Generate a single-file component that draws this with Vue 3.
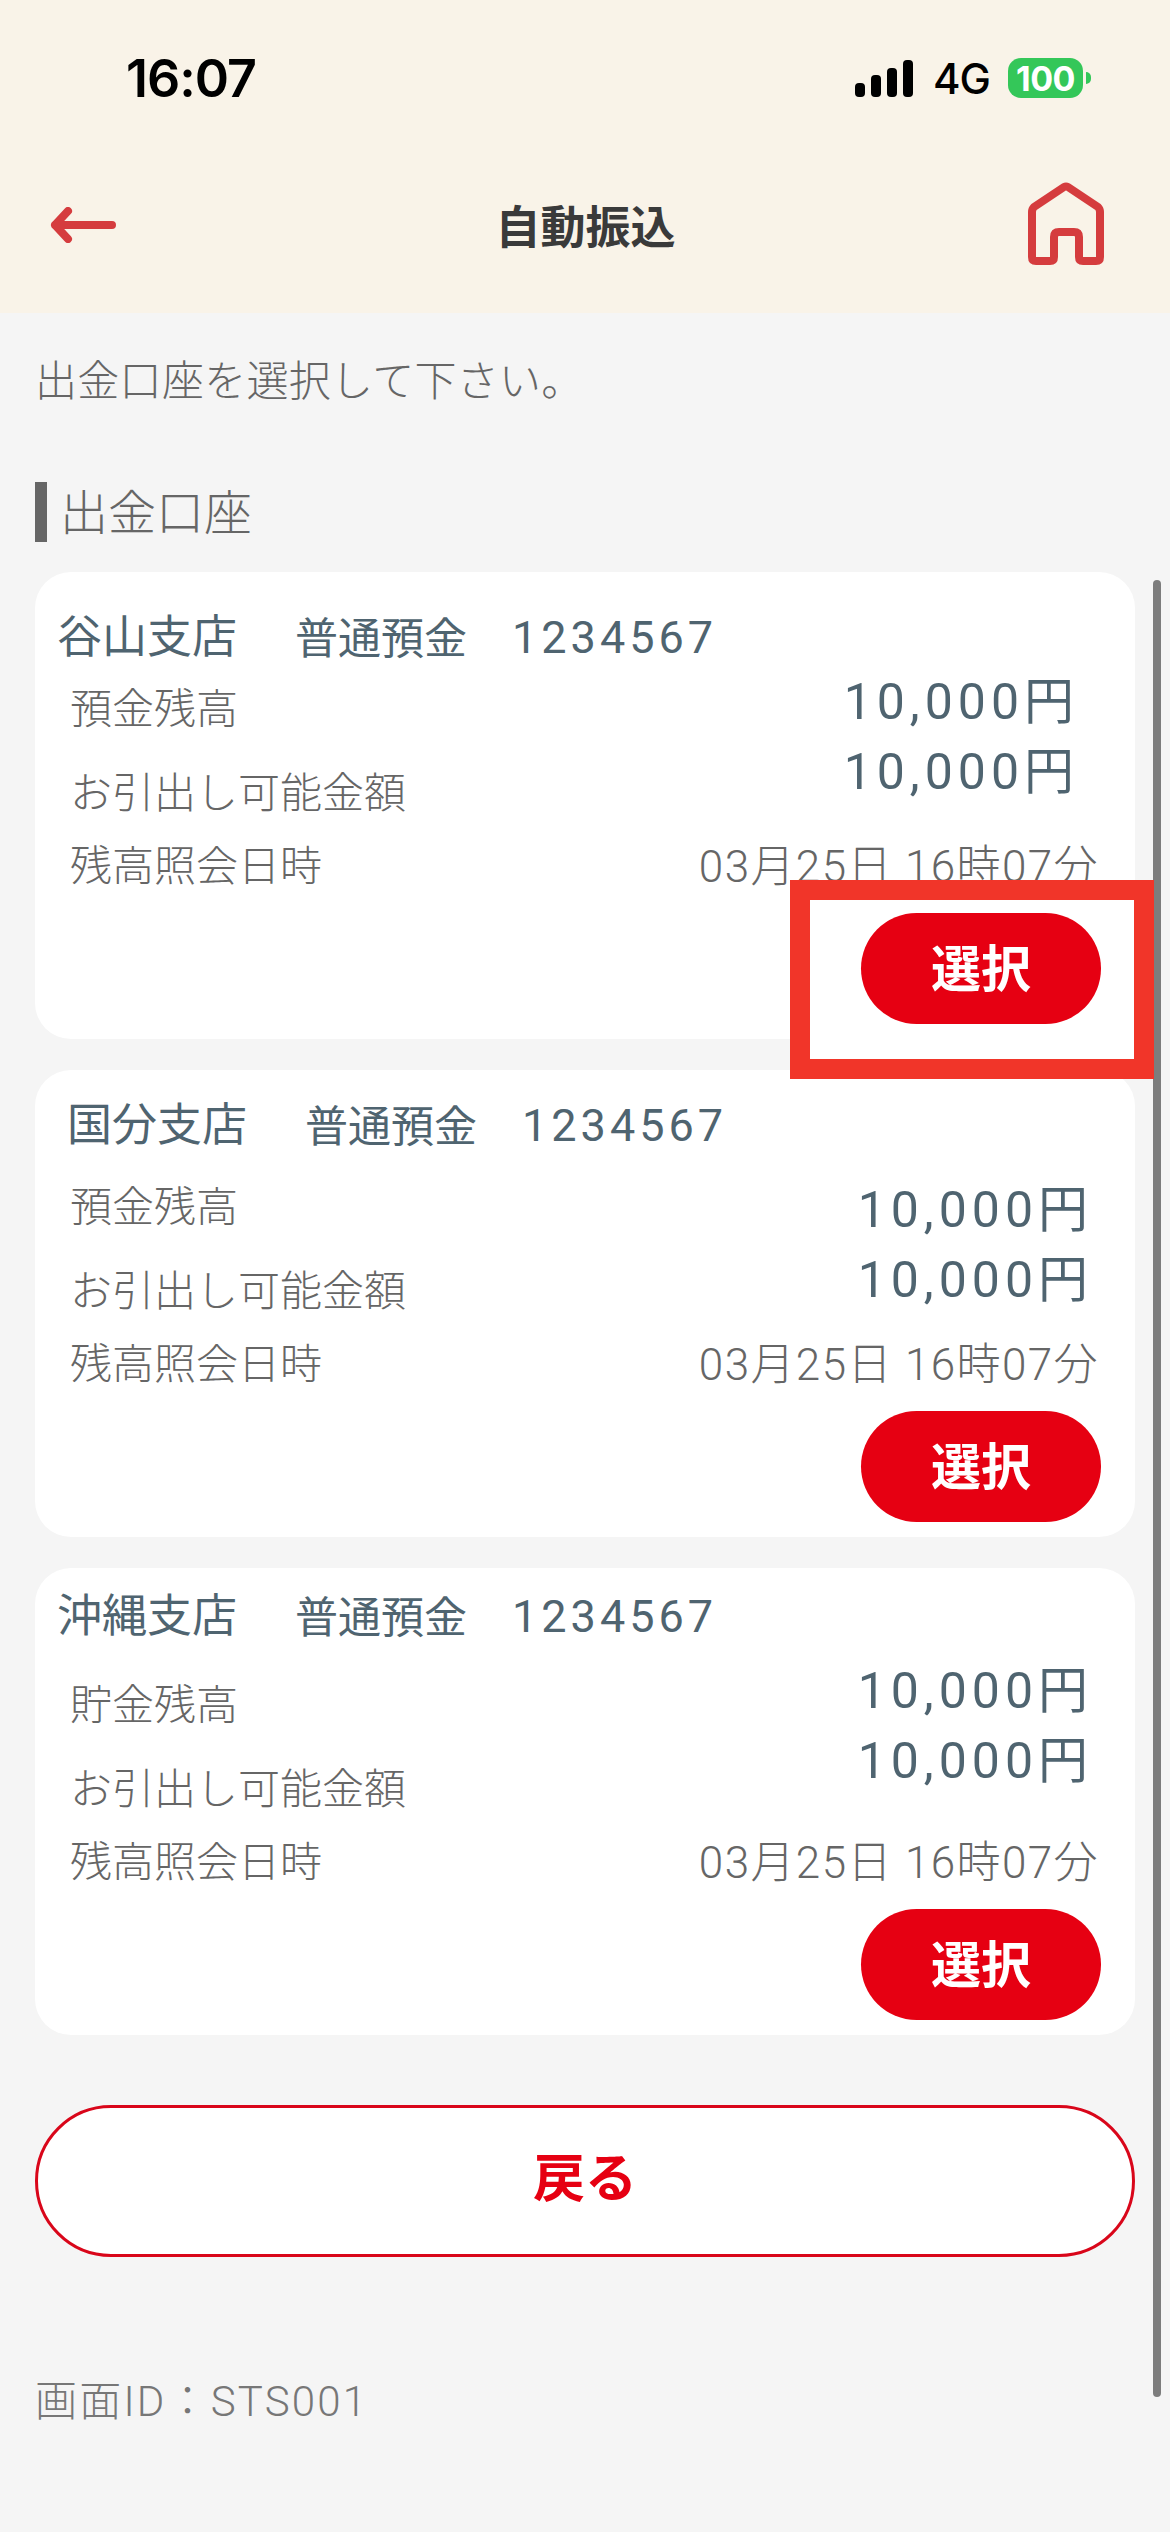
<script setup>
const accounts = [
  { id: 1, branch: '谷山支店', variant: 'a', balanceLabel: '預金残高', marked: true },
  { id: 2, branch: '国分支店', variant: 'b', balanceLabel: '預金残高', marked: false },
  { id: 3, branch: '沖縄支店', variant: 'c', balanceLabel: '貯金残高', marked: false },
]
</script>

<template>
  <div class="page">
    <header class="top">
      <div class="status">
        <span class="time">16:07</span>
        <div class="status-right">
          <div class="signal">
            <i class="bar1"></i><i class="bar2"></i><i class="bar3"></i><i class="bar4"></i>
          </div>
          <span class="net">4G</span>
          <div class="battery"><span>100</span></div>
          <i class="battery-nub"></i>
        </div>
      </div>
      <nav class="nav">
        <svg class="arrow" viewBox="0 0 68 36" width="68" height="36">
          <path d="M63 18H6M19 4 6 18l13 14" fill="none" stroke="#d53c3e" stroke-width="8" stroke-linecap="round" stroke-linejoin="round" />
        </svg>
        <h1>自動振込</h1>
        <svg class="home" viewBox="0 0 76 83" width="76" height="83">
          <path d="M4 30Q4 27 6 25L36 5Q38 4 40 5L70 25Q72 27 72 30V75Q72 79 68 79H55Q51 79 51 75V55Q51 50 46 50H31Q26 50 26 55V75Q26 79 22 79H8Q4 79 4 75Z" fill="none" stroke="#d53c3e" stroke-width="8" stroke-linejoin="round" />
        </svg>
      </nav>
    </header>

    <main class="content">
      <p class="intro">出金口座を選択して下さい。</p>
      <h2 class="section">出金口座</h2>

      <div v-for="acc in accounts" :key="acc.id" class="card" :class="'card-' + acc.variant">
        <div class="head">
          <span class="branch">{{ acc.branch }}</span>
          <span class="kind">普通預金</span>
          <span class="number">1234567</span>
        </div>
        <div class="balance">
          <div class="labels">
            <p>{{ acc.balanceLabel }}</p>
            <p>お引出し可能金額</p>
          </div>
          <div class="amounts">
            <p>10,000円</p>
            <p>10,000円</p>
          </div>
        </div>
        <div class="date-row">
          <span>残高照会日時</span>
          <span class="date">03月25日 16時07分</span>
        </div>
        <div class="actions">
          <button class="select-btn">選択</button>
        </div>
        <div v-if="acc.marked" class="marker"></div>
      </div>

      <button class="back-btn">戻る</button>
      <p class="screen-id">画面ID：STS001</p>
    </main>

    <div class="scrollbar"></div>
  </div>
</template>

<style scoped>
.page {
  position: relative;
  width: 1170px;
  height: 2532px;
  overflow: hidden;
  background: #f5f5f5;
  font-family: Roboto, "Noto Sans CJK JP", sans-serif;
  font-weight: 300;
  color: #666;
}
p, h1, h2 {
  margin: 0;
  font-weight: 300;
}

.top {
  background: #f9f3e8;
  height: 313px;
}
.status {
  height: 156px;
  display: flex;
  justify-content: space-between;
  align-items: center;
  padding: 0 79px 0 126px;
}
.time {
  font-family: Inter, sans-serif;
  font-size: 52px;
  font-weight: 600;
  color: #000;
  letter-spacing: -1px;
}
.status-right {
  display: flex;
  align-items: center;
}
.signal {
  display: flex;
  align-items: flex-end;
  gap: 6px;
  height: 37px;
}
.signal i {
  display: block;
  width: 10px;
  background: #000;
  border-radius: 4px;
}
.bar1 { height: 14px; }
.bar2 { height: 22px; }
.bar3 { height: 29px; }
.bar4 { height: 37px; }
.net {
  margin-left: 20px;
  font-family: Inter, sans-serif;
  font-size: 42px;
  font-weight: 500;
  color: #000;
  width: 55px;
  letter-spacing: -1px;
}
.battery {
  margin-left: 20px;
  width: 75px;
  height: 40px;
  border-radius: 13px;
  background: #34c759;
  display: flex;
  align-items: center;
  justify-content: center;
}
.battery span {
  font-family: Inter, sans-serif;
  font-size: 34px;
  font-weight: 700;
  color: #fff;
  letter-spacing: -0.5px;
}
.battery-nub {
  display: block;
  width: 5px;
  height: 12px;
  margin-left: 3px;
  background: #34c759;
  border-radius: 0 6px 6px 0;
}

.nav {
  height: 138px;
  display: flex;
  align-items: center;
  justify-content: space-between;
  padding: 0 66px 0 49px;
}
.nav h1 {
  font-size: 45px;
  font-weight: 700;
  color: #3a3a3a;
  margin-left: 26px;
  margin-top: -2px;
}
.home {
  margin-top: -4px;
}

.content {
  padding: 39px 35px 0;
}
.intro {
  font-size: 42px;
  line-height: 60px;
  letter-spacing: 0.3px;
}
.section {
  margin-top: 70px;
  border-left: 12px solid #666;
  padding-left: 13px;
  height: 60px;
  font-size: 48px;
  line-height: 64px;
  margin-bottom: 30px;
}

.card {
  position: relative;
  height: 467px;
  margin-bottom: 31px;
  background: #fff;
  border-radius: 36px;
  font-size: 42px;
}
.head {
  height: 87px;
  box-sizing: border-box;
  padding-left: 22px;
  display: flex;
  color: #4f6470;
  font-size: 45px;
  font-weight: 400;
  line-height: 50px;
  white-space: nowrap;
}
.kind {
  margin-left: 58px;
  font-size: 43px;
  line-height: 52px;
}
.number {
  margin-left: 45px;
  letter-spacing: 4px;
}
.card-a .head { padding-top: 41px; }
.card-b .head { padding-top: 31px; padding-left: 32px; }
.card-c .head { padding-top: 24px; }

.balance {
  height: 161px;
  display: flex;
  justify-content: space-between;
}
.labels {
  padding: 26px 0 0 35px;
  line-height: 50px;
}
.labels p + p {
  margin-top: 34px;
}
.amounts {
  padding-right: 42px;
  font-size: 50px;
  line-height: 70px;
  letter-spacing: 5px;
  color: #4f6470;
}
.amounts p {
  font-weight: 400;
}
.card-a .amounts { padding-top: 8px; padding-right: 56px; }
.card-b .amounts { padding-top: 18px; }
.card-c .amounts { padding-top: 1px; }

.date-row {
  margin-top: 22px;
  padding: 0 36px 0 35px;
  height: 50px;
  line-height: 50px;
  display: flex;
  justify-content: space-between;
}
.date {
  font-size: 44px;
  letter-spacing: 1.4px;
}
.actions {
  margin-top: 21px;
  padding-right: 34px;
  display: flex;
  justify-content: flex-end;
}
.select-btn {
  position: relative;
  z-index: 2;
  width: 240px;
  height: 111px;
  padding: 0 0 7px;
  border: 0;
  border-radius: 56px;
  background: #e60012;
  color: #fff;
  font-family: inherit;
  font-size: 50px;
  font-weight: 700;
}
.marker {
  position: absolute;
  z-index: 1;
  left: 755px;
  top: 308px;
  width: 364px;
  height: 199px;
  box-sizing: border-box;
  border: 20px solid #f13529;
  background: #fff;
}

.back-btn {
  display: block;
  width: 100%;
  height: 152px;
  margin-top: 70px;
  padding: 0 0 13px;
  box-sizing: border-box;
  border: 3px solid #d9061a;
  border-radius: 76px;
  background: #fff;
  color: #e60012;
  font-family: inherit;
  font-size: 52px;
  font-weight: 700;
}
.screen-id {
  margin-top: 115px;
  font-size: 42px;
  line-height: 60px;
  letter-spacing: 2.2px;
  color: #777;
}

.scrollbar {
  position: absolute;
  left: 1153px;
  top: 580px;
  width: 8px;
  height: 1817px;
  border-radius: 4px;
  background: #7d7d7d;
}
</style>
